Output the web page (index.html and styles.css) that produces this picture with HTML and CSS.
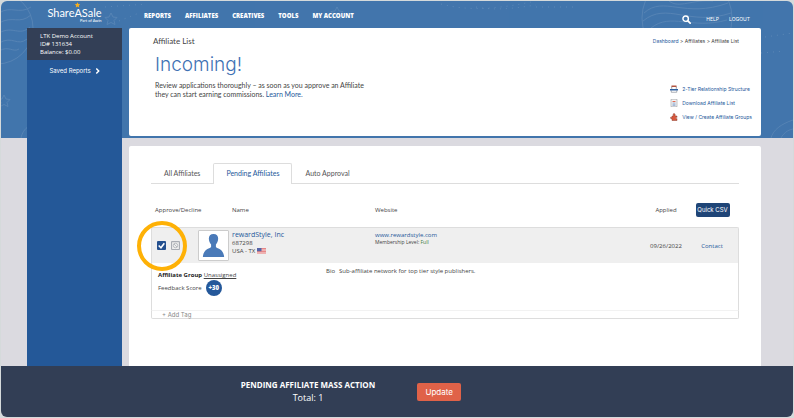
FILE: index.html
```html
<!DOCTYPE html>
<html lang="en">
    <head>
        <meta charset="UTF-8" />
        <meta name="viewport" content="width=device-width, initial-scale=1.0" />
        <title>Affiliate List</title>
        <link rel="stylesheet" href="styles.css">
    </head>
    <body>
        <div class="page">
            <svg class="pattern" viewBox="0 0 792 137" preserveAspectRatio="xMidYMin slice" fill="none" stroke="#fff" aria-hidden="true">
                <g opacity=".1">
                    <circle cx="-4" cy="27" r="36" />
                    <path d="M-2 12c12-8 20 2 32-6M-2 22c14-8 20 2 32-8M-2 32c14-8 20 4 31-6M-2 42c14-8 18 4 28-4M-2 50c10-6 14 2 20-2" />
                    <circle cx="686" cy="17" r="45" />
                    <path d="M643 12c20-18 40 6 84-10M642 20c24-20 46 6 88-8M650 27c20-16 40 2 76-8M668 0c10 8 24-2 44 0M770 137c2-8 10-14 22-18M780 137c2-4 6-8 12-9" />
                    <path d="M110 12l2 4 4 .5-3 3 1 4-4-2-4 2 1-4-3-3 4-.5zM336 6l2 4 4 .5-3 3 1 4-4-2-4 2 1-4-3-3 4-.5zM3 94l2 4 4 .5-3 3 1 4-4-2-4 2 1-4-3-3 4-.5z" />
                    <path d="M20 137c2-10 10-16 28-18" />
                </g>
                <path opacity=".14" stroke-dasharray="1 5" d="M104 6l42-3M118 20l20-8M440 3c30 8 60 4 90-2M475 6c20 4 40 1 60-2M535 6h40M764 36l28-4M760 52l24-2" />
            </svg>

            <header class="header">
                <a class="logo" href="#">
                    <svg class="logo-star" viewBox="0 0 24 24" aria-hidden="true"><path fill="#f9ae1b" d="M12 1l3.3 7 7.7.9-5.700 5.300 1.500 7.600L12 18l-6.800 3.800 1.500-7.600L1 8.900 8.700 8z" /></svg>
                    <span class="logo-name">ShareASale</span>
                    <span class="logo-sub">Part of Awin</span>
                </a>
                <nav class="nav">
                    <a href="#">REPORTS</a>
                    <a href="#">AFFILIATES</a>
                    <a href="#">CREATIVES</a>
                    <a href="#">TOOLS</a>
                    <a href="#">MY ACCOUNT</a>
                </nav>
                <div class="tools">
                    <button class="search" type="button" aria-label="Search">
                        <svg viewBox="0 0 16 16" fill="none" stroke="#fff"><circle cx="6.500" cy="6.500" r="4.800" stroke-width="2.600" /><path d="M10.500 10.500l4 4" stroke-width="3" stroke-linecap="round" /></svg>
                    </button>
                    <a href="#">HELP</a>
                    <a href="#">LOGOUT</a>
                </div>
            </header>

            <div class="layout">
                <aside class="sidebar">
                    <div class="account">
                        <p>LTK Demo Account</p>
                        <p>ID# 131634</p>
                        <p>Balance: $0.00</p>
                    </div>
                    <a class="saved" href="#">Saved Reports
                        <svg viewBox="0 0 8 10" fill="none" stroke="#fff" stroke-width="2.400" aria-hidden="true"><path d="M2 1l4 4-4 4" /></svg>
                    </a>
                </aside>

                <main class="main">
                    <section class="panel intro">
                        <div class="intro-text">
                            <h2>Affiliate List</h2>
                            <h1>Incoming!</h1>
                            <p>Review applications thoroughly – as soon as you approve an Affiliate<br>they can start earning commissions. <a href="#">Learn More.</a></p>
                        </div>
                        <div class="intro-side">
                            <div class="crumbs"><a href="#">Dashboard</a> &gt; Affiliates &gt; Affiliate List</div>
                            <ul class="links">
                                <li><a href="#">
                                    <svg viewBox="0 0 16 16" aria-hidden="true"><path fill="#b5543f" d="M3 1h10v4H3z" /><path fill="#fff" d="M4 4h8v4H4z" /><path fill="none" stroke="#5b6270" d="M3.500 3v5M12.500 3v5M2.500 11v3.500h11V11" /><path fill="#2d5f9e" d="M0 8h16v3H0z" /></svg>
                                    2-Tier Relationship Structure</a></li>
                                <li><a href="#">
                                    <svg viewBox="0 0 16 16" aria-hidden="true"><path fill="#f4f4f4" stroke="#85888e" d="M2 .5h12v15H2z" /><path stroke="#e36a50" stroke-width="2" d="M5 5h6" /><path stroke="#7d9cc8" stroke-width="1.500" d="M5 8h6M5 10.500h6M5 12.800h6" /></svg>
                                    Download Affiliate List</a></li>
                                <li><a href="#">
                                    <svg viewBox="0 0 16 16" aria-hidden="true"><path fill="#dc573c" stroke="#8c4030" d="M4 6h3c-1-2-1-5 1-5s3 3 2 5h4v3c-2-1-3 0-3 1s1 2 3 1v4H4v-4c-2 1-3 0-3-1.500S2 8 4 9z" /></svg>
                                    View / Create Affiliate Groups</a></li>
                            </ul>
                        </div>
                    </section>

                    <section class="panel list">
                        <nav class="tabs">
                            <a class="tab" href="#">All Affiliates</a>
                            <a class="tab active" href="#">Pending Affiliates</a>
                            <a class="tab" href="#">Auto Approval</a>
                        </nav>

                        <table class="table">
                            <colgroup>
                                <col class="col-check">
                                <col class="col-photo">
                                <col class="col-name">
                                <col>
                                <col class="col-applied">
                                <col class="col-contact">
                            </colgroup>
                            <thead>
                                <tr>
                                    <th class="th-check" colspan="2">Approve/Decline</th>
                                    <th>Name</th>
                                    <th>Website</th>
                                    <th class="center">Applied</th>
                                    <th class="center"><button class="csv" type="button">Quick CSV</button></th>
                                </tr>
                            </thead>
                            <tbody>
                                <tr class="row">
                                    <td>
                                        <div class="checks">
                                            <input class="check approve" type="checkbox" aria-label="Approve" checked>
                                            <input class="check decline" type="checkbox" aria-label="Decline">
                                            <span class="ring"></span>
                                        </div>
                                    </td>
                                    <td>
                                        <svg class="photo" viewBox="0 0 30 30" role="img" aria-label="rewardStyle, Inc"><path fill="#4a7ab8" d="M15 3c3.500 0 5 2.200 4.800 5.300-.1 2.700-1.300 4.200-2.300 5.700v2.500c2 2 8 2 8.500 10.500H4c.5-8.500 6.500-8.500 8.500-10.500V14c-1-1.500-2.200-3-2.300-5.700C10 5.200 11.500 3 15 3z" /></svg>
                                    </td>
                                    <td class="top">
                                        <a class="title" href="#">rewardStyle, Inc</a>
                                        <div class="meta">687298</div>
                                        <div class="meta">USA - TX <svg class="flag" viewBox="0 0 18 12" role="img" aria-label="US"><path fill="#f6dede" d="M0 0h18v12H0z" /><path stroke="#e26a6a" stroke-width="1.500" d="M0 1h18M0 4h18M0 7h18M0 10h18" /><path fill="#5564a8" d="M0 0h9v6.500H0z" /></svg></div>
                                    </td>
                                    <td class="top">
                                        <a class="site" href="#">www.rewardstyle.com</a>
                                        <div class="level">Membership Level: <span>Full</span></div>
                                    </td>
                                    <td class="center">09/26/2022</td>
                                    <td class="center"><a href="#">Contact</a></td>
                                </tr>
                                <tr class="detail">
                                    <td colspan="6">
                                        <div class="detail-body">
                                            <div class="group">
                                                <div><b>Affiliate Group</b> <a class="unassigned" href="#">Unassigned</a></div>
                                                <div class="feedback">Feedback Score <span class="score">+30</span></div>
                                            </div>
                                            <div class="bio"><span>Bio</span><span>Sub-affiliate network for top tier style publishers.</span></div>
                                        </div>
                                    </td>
                                </tr>
                                <tr class="tags">
                                    <td colspan="6"><button class="add-tag" type="button">+ Add Tag</button></td>
                                </tr>
                            </tbody>
                        </table>
                    </section>
                </main>
            </div>

            <footer class="footer">
                <div class="summary">
                    <strong>PENDING AFFILIATE MASS ACTION</strong>
                    <span>Total: 1</span>
                </div>
                <button class="update" type="button">Update</button>
            </footer>
        </div>
    </body>
</html>
```

FILE: styles.css
```css
* {
    padding: 0;
    margin: 0;
    box-sizing: border-box;
}
body {
    padding: 1px;
    background-color: #d5dadb;
    font-family: "Open Sans", "Noto Sans", sans-serif;
    font-size: 6px;
    line-height: 8px;
    color: #444;
}
a {
    color: #24589a;
    text-decoration: none;
}
button {
    border: 0;
    background: none;
    font: inherit;
    color: inherit;
    cursor: pointer;
}
ul {
    list-style: none;
}
svg {
    display: block;
}
.page {
    position: relative;
    display: flex;
    flex-direction: column;
    min-height: calc(100vh - 2px);
    border-radius: 6px;
    overflow: hidden;
    background: linear-gradient(#4275ac 137px, #dbdae0 137px);
}
.pattern {
    position: absolute;
    top: 0;
    left: 0;
    width: 100%;
    height: 137px;
}

/* header */
.header,
.layout {
    position: relative;
    display: grid;
    grid-template-columns: 95px 1fr;
    column-gap: 7px;
    padding: 0 32px 0 26px;
}
.header {
    grid-template-columns: 95px 1fr auto;
    height: 27px;
    color: #fff;
}
.header a {
    color: #fff;
}
.logo {
    display: flex;
    flex-direction: column;
    align-items: center;
    justify-self: center;
    padding-top: 1px;
    font-family: Lato, sans-serif;
}
.logo-star {
    width: 7px;
    height: 6px;
    margin-left: 7px;
}
.logo-name {
    font-size: 11px;
    line-height: 10px;
}
.logo-sub {
    align-self: flex-end;
    font-size: 4px;
    line-height: 5px;
}
.nav {
    display: flex;
    gap: 14px;
    padding: 11px 0 0 15px;
    font-size: 6px;
    font-weight: 800;
}
.tools {
    display: flex;
    align-items: center;
    gap: 10px;
    padding: 9px 11px 0 0;
    font-family: Inter, sans-serif;
    font-size: 5px;
}
.search {
    margin-right: 5px;
}
.search svg {
    width: 9px;
    height: 9px;
}

/* sidebar */
.layout {
    flex: 1;
}
.sidebar {
    background-color: #245898;
    color: #fff;
}
.account {
    height: 32px;
    padding: 4px 13px;
    background-color: #333f56;
}
.saved {
    display: flex;
    justify-content: center;
    align-items: center;
    gap: 4px;
    padding-top: 7px;
    font-family: Inter, sans-serif;
    color: #fff;
}
.saved svg {
    width: 5px;
    height: 6px;
}

/* panels */
.main {
    display: flex;
    flex-direction: column;
    gap: 10px;
}
.panel {
    background-color: #fff;
    border-radius: 2px;
}
.intro {
    display: flex;
    justify-content: space-between;
    height: 108px;
    padding: 8px 9px 0 24px;
    font-family: Inter, sans-serif;
}
.intro h2 {
    font-family: Lato, sans-serif;
    font-size: 8px;
    line-height: 10px;
    font-weight: 400;
}
.intro h1 {
    padding: 7px 0 4px 2px;
    font-size: 19px;
    line-height: 24px;
    font-weight: 300;
    color: #3f72b4;
}
.intro p {
    padding-left: 2px;
    font-family: Lato, sans-serif;
    font-size: 7px;
    line-height: 9px;
}
.intro-side {
    display: flex;
    flex-direction: column;
    align-items: flex-end;
    padding-top: 1px;
    font-size: 5px;
}
.crumbs {
    padding-right: 13px;
}
.links {
    display: flex;
    flex-direction: column;
    gap: 6px;
    padding-top: 40px;
}
.links a {
    display: flex;
    align-items: center;
    gap: 4px;
}
.links svg {
    width: 8px;
    height: 8px;
}

/* list */
.list {
    flex: 1;
    padding: 17px 22px 0;
    border-radius: 2px 2px 0 0;
}
.tabs {
    display: flex;
    margin-bottom: 8px;
    border-bottom: 1px solid #ddd;
    font-family: Lato, sans-serif;
    font-size: 7px;
}
.tab {
    margin-bottom: -1px;
    padding: 5px 12px 6px;
    border: 1px solid transparent;
    border-bottom: 0;
    line-height: 9px;
    color: #555;
}
.tab.active {
    border-color: #ddd;
    border-radius: 2px 2px 0 0;
    background-color: #fff;
    color: #24589a;
}
.table {
    width: 100%;
    table-layout: fixed;
    border-spacing: 0;
}
.col-check {
    width: 47px;
}
.col-photo {
    width: 34px;
}
.col-name {
    width: 143px;
}
.col-applied {
    width: 40px;
}
.col-contact {
    width: 53px;
}
.table th {
    height: 35px;
    font-weight: 400;
    text-align: left;
}
.table .th-check {
    padding-left: 4px;
}
.table .center {
    text-align: center;
}
.csv {
    height: 14px;
    width: 34px;
    border-radius: 2px;
    background-color: #1f4577;
    font-family: Inter, sans-serif;
    color: #fff;
}
.row td {
    height: 36px;
    border-top: 1px solid #ddd;
    background-color: #efefef;
}
.row td:first-child {
    border-left: 1px solid #ddd;
    border-radius: 2px 0 0 0;
}
.row td:last-child {
    border-right: 1px solid #ddd;
    border-radius: 0 2px 0 0;
}
.checks {
    position: relative;
    display: flex;
    align-items: center;
    gap: 5px;
    padding-left: 5px;
}
.check {
    appearance: none;
    width: 9px;
    height: 9px;
    border-radius: 1px;
    background: center / 100% 100% no-repeat;
}
.approve {
    background-color: #24508f;
    background-image: url("data:image/svg+xml,%3Csvg xmlns='http://www.w3.org/2000/svg' viewBox='0 0 8 8' fill='none' stroke='white' stroke-width='1.4'%3E%3Cpath d='M1.500 4l2 2 3-4'/%3E%3C/svg%3E");
}
.decline {
    background-image: url("data:image/svg+xml,%3Csvg xmlns='http://www.w3.org/2000/svg' viewBox='0 0 8 8' fill='none' stroke='%23a9adb4'%3E%3Cpath d='M.5.5h7v7h-7z'/%3E%3Ccircle cx='4' cy='4' r='2' stroke-width='.7'/%3E%3Cpath d='M2.600 2.600l2.800 2.800' stroke-width='.7'/%3E%3C/svg%3E");
}
.ring {
    position: absolute;
    top: 50%;
    left: 10px;
    width: 50px;
    height: 50px;
    border: 4px solid #feb106;
    border-radius: 50%;
    transform: translate(-50%, -50%);
    pointer-events: none;
}
.photo {
    width: 31px;
    height: 31px;
    border: 1px solid #ccc;
    border-radius: 1px;
    background-color: #fff;
}
.table .top {
    padding-top: 3px;
    vertical-align: top;
}
.title,
.site {
    display: block;
}
.title {
    font-size: 7px;
}
.meta {
    display: flex;
    align-items: center;
    gap: 2px;
}
.flag {
    width: 9px;
    height: 6px;
}
.level {
    font-size: 5px;
    line-height: 6px;
}
.level span {
    color: #3d7a3d;
}
.detail td {
    height: 47px;
    border: 1px solid #ddd;
    border-width: 0 1px;
    vertical-align: top;
}
.detail-body {
    display: flex;
    padding: 4px 6px;
}
.group {
    width: 168px;
    padding-top: 4px;
}
.group b {
    color: #222;
}
.unassigned {
    color: #444;
    text-decoration: underline;
}
.feedback {
    display: flex;
    align-items: center;
    gap: 4px;
    padding-top: 1px;
}
.score {
    width: 16px;
    height: 16px;
    border-radius: 50%;
    background-color: #24589a;
    line-height: 16px;
    font-weight: 800;
    text-align: center;
    color: #fff;
}
.bio {
    display: flex;
    gap: 4px;
}
.tags td {
    border: 1px solid #ddd;
    border-top-color: #f2f2f2;
    border-radius: 0 0 2px 2px;
}
.add-tag {
    display: block;
    padding-left: 10px;
    font-family: Inter, sans-serif;
    line-height: 7px;
    color: #888;
}

/* footer */
.footer {
    position: relative;
    display: flex;
    justify-content: center;
    align-items: center;
    gap: 42px;
    height: 51px;
    padding-right: 92px;
    background-color: #323e55;
    color: #fff;
}
.summary {
    display: flex;
    flex-direction: column;
    align-items: center;
}
.summary strong {
    font-size: 8px;
    line-height: 12px;
    font-weight: 700;
}
.summary span {
    font-size: 9px;
    line-height: 14px;
}
.update {
    width: 44px;
    height: 18px;
    border-radius: 2px;
    background-color: #e06248;
    font-family: Inter, sans-serif;
    font-size: 8px;
}
```
